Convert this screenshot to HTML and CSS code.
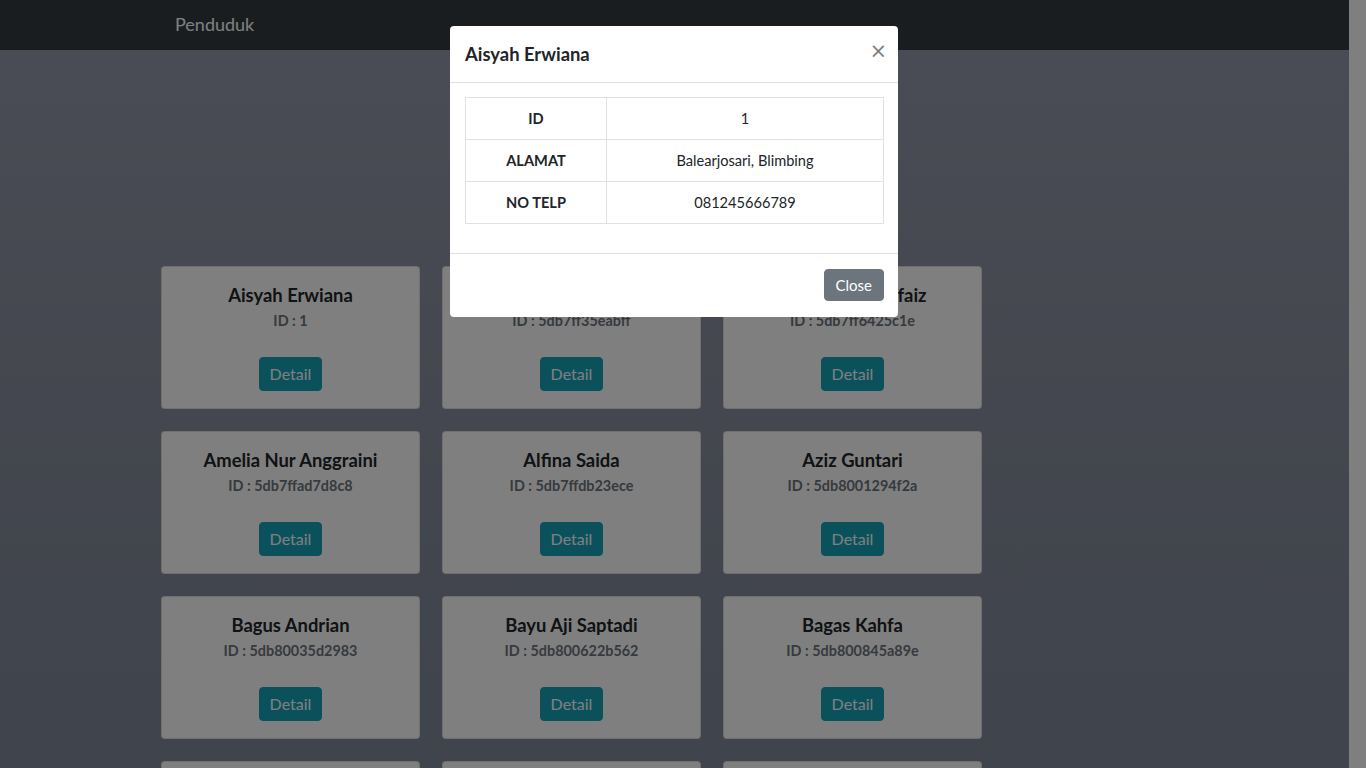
FILE: index.html
```html
<!DOCTYPE html>
<html lang="id">
<head>
<meta charset="utf-8">
<title>Penduduk</title>
<link rel="stylesheet" href="styles.css">
</head>
<body>
<div class="page">
  <nav class="navbar">
    <a class="brand" href="#">Penduduk</a>
  </nav>
  <main class="content">
    <div class="grid">
      <div class="card"><h5 class="card-title">Aisyah Erwiana</h5><p class="card-id">ID : 1</p><button class="btn btn-info">Detail</button></div>
      <div class="card"><h5 class="card-title">Dewi Lestari</h5><p class="card-id">ID : 5db7ff35eabff</p><button class="btn btn-info">Detail</button></div>
      <div class="card"><h5 class="card-title">Muhammad Alfaiz</h5><p class="card-id">ID : 5db7ff6425c1e</p><button class="btn btn-info">Detail</button></div>
      <div class="card"><h5 class="card-title">Amelia Nur Anggraini</h5><p class="card-id">ID : 5db7ffad7d8c8</p><button class="btn btn-info">Detail</button></div>
      <div class="card"><h5 class="card-title">Alfina Saida</h5><p class="card-id">ID : 5db7ffdb23ece</p><button class="btn btn-info">Detail</button></div>
      <div class="card"><h5 class="card-title">Aziz Guntari</h5><p class="card-id">ID : 5db8001294f2a</p><button class="btn btn-info">Detail</button></div>
      <div class="card"><h5 class="card-title">Bagus Andrian</h5><p class="card-id">ID : 5db80035d2983</p><button class="btn btn-info">Detail</button></div>
      <div class="card"><h5 class="card-title">Bayu Aji Saptadi</h5><p class="card-id">ID : 5db800622b562</p><button class="btn btn-info">Detail</button></div>
      <div class="card"><h5 class="card-title">Bagas Kahfa</h5><p class="card-id">ID : 5db800845a89e</p><button class="btn btn-info">Detail</button></div>
      <div class="card"><h5 class="card-title">Cahya Putri</h5><p class="card-id">ID : 5db800a1c3f10</p><button class="btn btn-info">Detail</button></div>
      <div class="card"><h5 class="card-title">Dimas Pratama</h5><p class="card-id">ID : 5db800c7e2b41</p><button class="btn btn-info">Detail</button></div>
      <div class="card"><h5 class="card-title">Eka Wulandari</h5><p class="card-id">ID : 5db800e9a7d03</p><button class="btn btn-info">Detail</button></div>
    </div>
  </main>
</div>

<div class="backdrop"></div>

<div class="modal">
  <div class="modal-content">
    <div class="modal-header">
      <h5 class="modal-title">Aisyah Erwiana</h5>
      <button class="close" aria-label="Close">&times;</button>
    </div>
    <div class="modal-body">
      <table class="table">
        <tr><th>ID</th><td>1</td></tr>
        <tr><th>ALAMAT</th><td>Balearjosari, Blimbing</td></tr>
        <tr><th>NO TELP</th><td>081245666789</td></tr>
      </table>
    </div>
    <div class="modal-footer">
      <button class="btn btn-secondary">Close</button>
    </div>
  </div>
</div>
</body>
</html>
```
FILE: styles.css
```css
* { box-sizing: border-box; }
html, body { margin: 0; height: 100%; }
body {
  font-family: Lato, "Open Sans", "Liberation Sans", sans-serif;
  font-size: 16px;
  color: #212529;
  background: #ffffff;
  padding-right: 17px;
  overflow: hidden;
}
.page {
  min-height: 100%;
  background: linear-gradient(180deg, #949aaa 0px, #8a909f 360px, #808898 718px) no-repeat;
  background-color: #808898;
}
.navbar {
  height: 50px;
  background: #343a40;
  display: flex;
  align-items: center;
  padding-left: 175px;
}
.brand {
  color: #ffffff;
  text-decoration: none;
  font-size: 18px;
  line-height: 28px;
  margin-top: -2px;
}
.content {
  padding: 216px 0 40px 161px;
}
.grid {
  display: grid;
  grid-template-columns: repeat(3, 259px);
  column-gap: 22px;
  row-gap: 22px;
}
.card {
  background: #ffffff;
  border: 1px solid rgba(0,0,0,.125);
  border-radius: 4px;
  height: 143px;
  padding: 17px 10px 0;
  text-align: center;
  display: flex;
  flex-direction: column;
  align-items: center;
}
.card-title {
  margin: 0;
  font-size: 18.4px;
  font-weight: 700;
  line-height: 22px;
  color: #212529;
}
.card-id {
  margin: 5px 0 0;
  font-size: 14.4px;
  font-weight: 700;
  line-height: 20px;
  color: #6c757d;
}
.btn {
  font-family: inherit;
  font-size: 16px;
  line-height: 22px;
  border-radius: 4px;
  border: 1px solid transparent;
  cursor: pointer;
}
.card .btn {
  margin-top: 26px;
  padding: 5px 10px;
}
.btn-info { background: #17a2b8; border-color: #17a2b8; color: #fff; }
.btn-secondary { background: #6c757d; border-color: #6c757d; color: #fff; padding: 4px 11px; font-size: 15px; }

.backdrop {
  position: fixed;
  inset: 0;
  background: rgba(0,0,0,.5);
}
.modal {
  position: fixed;
  inset: 0;
  padding-right: 18px;
}
.modal-content {
  width: 448px;
  margin: 26px auto 0;
  background: #fff;
  border-radius: 4px;
}
.modal-header {
  height: 57px;
  border-bottom: 1px solid #dee2e6;
  display: flex;
  align-items: center;
  justify-content: space-between;
  padding: 0 15px;
}
.modal-title {
  margin: 0;
  font-size: 18.4px;
  font-weight: 700;
  line-height: 24px;
  color: #212529;
}
.close {
  background: none;
  border: 0;
  padding: 0;
  font-family: "DejaVu Sans", sans-serif;
  font-size: 21px;
  font-weight: 400;
  line-height: 1;
  color: #000;
  opacity: .5;
  margin-top: -6px;
  margin-right: -4px;
}
.modal-body {
  padding: 14px 14px 29px 15px;
}
.table {
  width: 100%;
  border-collapse: collapse;
  font-size: 14.6px;
}
.table th, .table td {
  border: 1px solid #dee2e6;
  height: 42px;
  text-align: center;
  padding: 0 12px;
  color: #212529;
}
.table th { width: 141px; font-weight: 700; }
.table td { font-weight: 400; }
.modal-footer {
  border-top: 1px solid #dee2e6;
  padding: 15px 14px 16px;
  display: flex;
  justify-content: flex-end;
}
```
